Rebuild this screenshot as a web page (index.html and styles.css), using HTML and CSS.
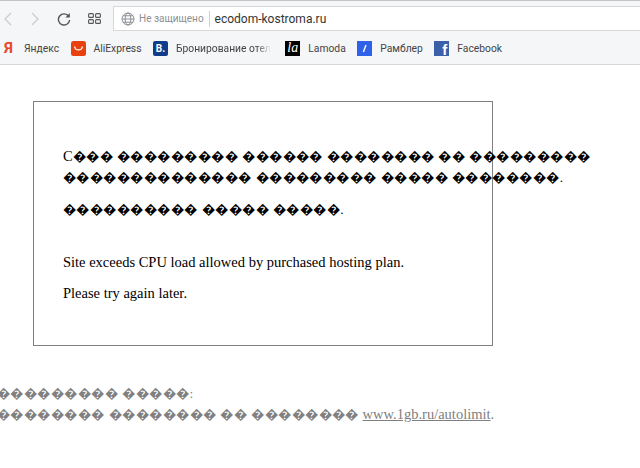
FILE: index.html
```html
<!DOCTYPE html>
<html lang="ru">
<head>
    <meta charset="UTF-8">
    <title>ecodom-kostroma.ru</title>
    <link rel="stylesheet" href="styles.css">
</head>
<body>
    <div class="toolbar">
        <div class="nav-buttons">
            <svg class="nav-icon" width="10" height="16" viewBox="0 0 10 16"><path d="M8 2 2 8l6 6" fill="none" stroke="#c9ced2" stroke-width="1.4"/></svg>
            <svg class="nav-icon" width="10" height="16" viewBox="0 0 10 16"><path d="M2 2l6 6-6 6" fill="none" stroke="#c9ced2" stroke-width="1.4"/></svg>
            <svg class="nav-icon" width="14" height="14" viewBox="0 0 14 14"><path d="M11.6 4.2A5.6 5.6 0 1 0 12.6 8" fill="none" stroke="#555" stroke-width="1.4"/><path d="M12.8 1v4.4H8.4z" fill="#555"/></svg>
            <svg class="nav-icon" width="13" height="11" viewBox="0 0 13 11"><g fill="none" stroke="#555" stroke-width="1.1"><rect x=".6" y=".6" width="4.8" height="3.8" rx="1"/><rect x="7.6" y=".6" width="4.8" height="3.8" rx="1"/><rect x=".6" y="6.6" width="4.8" height="3.8" rx="1"/><rect x="7.6" y="6.6" width="4.8" height="3.8" rx="1"/></g></svg>
        </div>
        <div class="address-bar">
            <svg width="14" height="14" viewBox="0 0 14 14"><g fill="none" stroke="#8a8f94" stroke-width="1"><circle cx="7" cy="7" r="6"/><ellipse cx="7" cy="7" rx="2.8" ry="6"/><path d="M1 7h12M2 3.8h10M2 10.2h10"/></g></svg>
            <span class="security">Не защищено</span>
            <span class="url">ecodom-kostroma.ru</span>
        </div>
    </div>

    <div class="bookmarks">
        <div class="bookmark">
            <span class="bm-icon bm-yandex">Я</span>
            <span class="bm-label">Яндекс</span>
        </div>
        <div class="bookmark">
            <svg class="bm-icon" width="15" height="15" viewBox="0 0 15 15"><rect width="15" height="15" rx="2.5" fill="#e8400f"/><path d="M3.6 5.5c.6 4.6 7.2 4.6 7.8 0" fill="none" stroke="#fff" stroke-width="1.3"/></svg>
            <span class="bm-label">AliExpress</span>
        </div>
        <div class="bookmark">
            <span class="bm-icon bm-booking">B.</span>
            <span class="bm-label bm-fade">Бронирование отел</span>
        </div>
        <div class="bookmark">
            <span class="bm-icon bm-lamoda">la</span>
            <span class="bm-label">Lamoda</span>
        </div>
        <div class="bookmark">
            <svg class="bm-icon" width="15" height="15" viewBox="0 0 15 15"><rect width="15" height="15" fill="#2f62e8"/><path d="M9 4 6.4 11" stroke="#fff" stroke-width="1.4"/></svg>
            <span class="bm-label">Рамблер</span>
        </div>
        <div class="bookmark">
            <span class="bm-icon bm-facebook">f</span>
            <span class="bm-label">Facebook</span>
        </div>
    </div>

    <div class="page">
        <div class="notice">
            <div class="notice-text">
                <p>C<span class="garbled">��� ��������� ������ �������� �� ���������<br>�������������� ��������� ����� ��������.</span></p>
                <p><span class="garbled">���������� ����� �����.</span></p>
                <p class="notice-en">Site exceeds CPU load allowed by purchased hosting plan.</p>
                <p>Please try again later.</p>
            </div>
        </div>
        <div class="more-info">
            <span class="garbled">��������� �����:<br>
            �������� �������� �� ��������</span> <a href="#">www.1gb.ru/autolimit</a>.
        </div>
    </div>
</body>
</html>
```

FILE: styles.css
```css
* {
    margin: 0;
    padding: 0;
    box-sizing: border-box;
}

body {
    background: #fff;
    font-family: "Liberation Serif", serif;
    overflow: hidden;
}

.toolbar {
    height: 31px;
    background: #f5f6f7;
    border-top: 1px solid #c4c4c4;
    display: flex;
    align-items: flex-start;
    padding-left: 3px;
}

.nav-buttons {
    width: 110px;
    height: 25px;
    margin-top: 5px;
    display: flex;
    align-items: center;
    gap: 17px;
}

.address-bar {
    flex: 1;
    height: 25px;
    margin-top: 5px;
    background: #fff;
    border: 1px solid #d6d8da;
    border-right: none;
    display: flex;
    align-items: center;
    padding-left: 7px;
    font-family: Roboto, sans-serif;
}

.security {
    margin-left: 4px;
    padding-right: 5px;
    border-right: 1px solid #d0d0d0;
    font-size: 10px;
    line-height: 16px;
    color: #8c9094;
}

.url {
    margin-left: 5px;
    font-size: 12px;
    color: #333;
}

.bookmarks {
    height: 34px;
    padding: 1px 0 0 1px;
    background: #f5f6f7;
    border-bottom: 1px solid #d8d8d8;
    display: flex;
    align-items: center;
    gap: 11.5px;
    font-family: Roboto, sans-serif;
    font-size: 10.3px;
    color: #444;
}

.bookmark {
    display: flex;
    align-items: center;
    gap: 8px;
}

.bm-icon {
    width: 15px;
    height: 15px;
    flex-shrink: 0;
}

.bm-yandex {
    color: #e8492b;
    font-size: 15px;
    font-weight: 700;
    line-height: 15px;
    text-align: center;
}

.bm-booking {
    background: #0f3d8c;
    border-radius: 2px;
    color: #fff;
    font-size: 10px;
    font-weight: 700;
    line-height: 15px;
    text-align: center;
}

.bm-lamoda {
    background: #000;
    color: #fff;
    font-family: "Liberation Serif", serif;
    font-size: 14px;
    font-style: italic;
    line-height: 14px;
    text-align: center;
}

.bm-facebook {
    background: #3b5fa8;
    color: #fff;
    font-family: "Liberation Sans", sans-serif;
    font-size: 15px;
    font-weight: 700;
    line-height: 17px;
    text-align: right;
    padding-right: 2px;
    overflow: hidden;
}

.bm-fade {
    margin-right: 3px;
    white-space: nowrap;
    -webkit-mask-image: linear-gradient(to right, #000 85%, transparent);
    mask-image: linear-gradient(to right, #000 85%, transparent);
}

.page {
    padding: 36px 0 0 33px;
}

.notice {
    width: 460px;
    height: 245px;
    border: 1px solid #808080;
    padding: 44px 0 0 29px;
}

.notice-text {
    width: 560px;
    font-size: 14.5px;
    line-height: 20px;
    color: #000;
}

.notice-text p {
    margin-bottom: 11px;
}

.notice-en {
    margin-top: 32px;
}

.garbled {
    font-size: 13.4px;
    letter-spacing: 0.48px;
}

.more-info {
    margin: 37px 0 0 -36px;
    white-space: nowrap;
    font-size: 14.5px;
    line-height: 20px;
    color: #808080;
}

.more-info a {
    color: #808080;
}
```
